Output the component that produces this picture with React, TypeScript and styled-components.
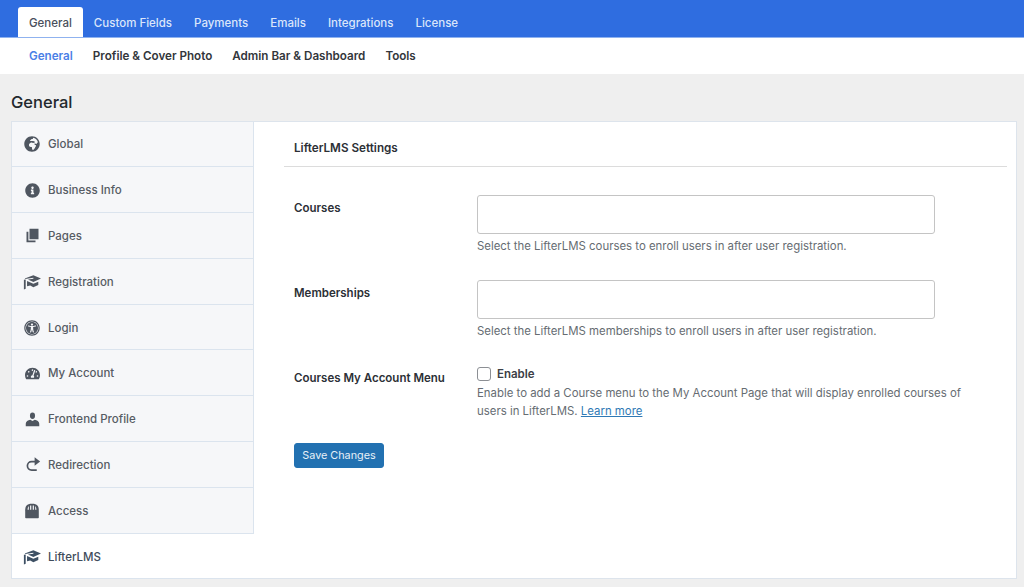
import React from "react";
import styled, { createGlobalStyle } from "styled-components";
import { FaGlobeAfrica, FaInfoCircle, FaTachometerAlt, FaUniversalAccess } from "react-icons/fa";

const Global = createGlobalStyle`
  html, body {
    margin: 0;
    padding: 0;
    height: 100%;
    overflow: hidden;
    background: #efefef;
    font-family: Inter, "Liberation Sans", sans-serif;
  }
`;

const PagesIcon = () => (
  <svg viewBox="0 0 20 20" width="15" height="15">
    <path d="M6 1h12v14H6z" fill="currentColor" />
    <path d="M2 5h2.500v11.500H14V19H2z" fill="currentColor" />
  </svg>
);

const CapIcon = () => (
  <svg viewBox="0 0 20 20" width="18" height="18">
    <path d="M11.500 2.500L20 6.200l-8.500 3.700-6-2.600 6-.9V5.200L2.500 6.600 2 6.200z" fill="currentColor" />
    <path d="M1 7.500l2-.4v10.300l-2 .9zM4.500 9l7 3 5.500-2.400v3.600l-5.500 2.600-3.500-2-3.500.8z" fill="currentColor" />
  </svg>
);

const PersonIcon = () => (
  <svg viewBox="0 0 20 20" width="15" height="15">
    <ellipse cx="10" cy="5" rx="3.400" ry="4.200" fill="currentColor" />
    <path d="M1 15.500c0-3 3-4.800 6-5.300l3 1.800 3-1.800c3 .5 6 2.300 6 5.300V19H1z" fill="currentColor" />
  </svg>
);

const RedoIcon = () => (
  <svg viewBox="0 0 20 20" width="17" height="17">
    <path d="M13 6.500H9a5 5 0 0 0 0 10h6" fill="none" stroke="currentColor" strokeWidth="2" />
    <path d="M12.500 1.500l6.500 5-6.500 5z" fill="currentColor" />
  </svg>
);

const StoreIcon = () => (
  <svg viewBox="0 0 20 20" width="16" height="16">
    <path d="M1.500 9C1.700 4 3 1 10 1s8.300 3 8.500 8v9a1 1 0 0 1-1 1h-15a1 1 0 0 1-1-1z" fill="currentColor" />
    <path d="M4.500 8.500c.1-2 .5-3.700 1.500-4.600v4.600zM7.600 8.500V3h1.500v5.500zM10.900 8.500V3h1.500v5.500zM14 3.900c1 .9 1.400 2.600 1.500 4.600H14z" fill="#f6f7f9" />
  </svg>
);

const Page = styled.div`
  width: 1024px;
  height: 587px;
  display: flex;
  flex-direction: column;
`;

const TopBar = styled.nav`
  height: 37px;
  background: #2f6de0;
  border-bottom: 1px solid #8fb2ef;
  display: flex;
  align-items: flex-end;
  padding-left: 18px;
`;

const TopTab = styled.a<{ $active?: boolean }>`
  height: 30px;
  box-sizing: border-box;
  display: flex;
  align-items: center;
  padding: 1px 11px 0;
  font-size: 11.500px;
  font-weight: 500;
  border-radius: 3px 3px 0 0;
  color: ${(p) => (p.$active ? "#4a4f5c" : "#dbe6fa")};
  background: ${(p) => (p.$active ? "#fff" : "transparent")};
`;

const SubBar = styled.nav`
  height: 36px;
  background: #fff;
  display: flex;
  align-items: center;
  gap: 20px;
  padding-left: 29px;
`;

const SubLink = styled.a<{ $active?: boolean }>`
  font-size: 11.650px;
  font-weight: 600;
  color: ${(p) => (p.$active ? "#4a7fe6" : "#33363b")};
`;

const Content = styled.main`
  flex: 1;
  padding: 0 7px 8px 11px;
  display: flex;
  flex-direction: column;
  min-height: 0;
`;

const Title = styled.h1`
  margin: 0;
  height: 46.500px;
  display: flex;
  align-items: center;
  padding-top: 9px;
  box-sizing: border-box;
  font-size: 16.500px;
  font-weight: 500;
  color: #23282d;
`;

const Panel = styled.div`
  flex: 1;
  min-height: 0;
  display: flex;
  background: #fff;
  border: 1px solid #dde4ec;
`;

const Sidebar = styled.ul`
  width: 242px;
  flex: none;
  list-style: none;
  margin: 0;
  padding: 0;
  background: #f6f7f9;
`;

const SideItem = styled.li<{ $active?: boolean }>`
  height: 45.800px;
  box-sizing: border-box;
  display: flex;
  align-items: center;
  padding-top: 1px;
  border-bottom: 1px solid #dbe4ee;
  border-right: ${(p) => (p.$active ? "none" : "1px solid #dbe4ee")};
  background: ${(p) => (p.$active ? "#fff" : "transparent")};
  color: ${(p) => (p.$active ? "#3f4c5c" : "#565c64")};
  font-size: 11.500px;
  font-weight: 500;
`;

const IconSlot = styled.span<{ $active?: boolean }>`
  width: 36px;
  flex: none;
  display: flex;
  justify-content: center;
  padding-left: 4px;
  box-sizing: border-box;
  color: ${(p) => (p.$active ? "#3d5064" : "#4f5660")};
  svg {
    display: block;
  }
`;

const Main = styled.section`
  flex: 1;
  min-width: 0;
  padding: 0 9px 0 30px;
`;

const SectionHead = styled.h2`
  margin: 0;
  height: 45.500px;
  box-sizing: border-box;
  display: flex;
  align-items: center;
  padding: 8px 0 0 10px;
  font-size: 11.700px;
  font-weight: 600;
  color: #2c3036;
  border-bottom: 1px solid #dcdcdc;
`;

const Form = styled.form`
  padding: 28px 0 0 10px;
`;

const Row = styled.div`
  display: flex;
  margin-bottom: 24.500px;
  &:last-of-type {
    margin-bottom: 23px;
  }
`;

const Label = styled.label`
  width: 183px;
  flex: none;
  padding-top: 6px;
  font-size: 11.500px;
  font-weight: 600;
  color: #2c3036;
`;

const Field = styled.div`
  flex: 1;
  min-width: 0;
`;

const SelectBox = styled.div`
  width: 458px;
  height: 39px;
  box-sizing: border-box;
  border: 1px solid #c4c4c4;
  border-radius: 3px;
  background: #fff;
`;

const Help = styled.p`
  margin: 4px 0 0;
  width: 500px;
  font-size: 11.400px;
  line-height: 17.500px;
  color: #666c72;
`;

const Check = styled.label`
  display: flex;
  align-items: center;
  gap: 6px;
  height: 16px;
  margin: 1px 0 -1px;
  font-size: 11.500px;
  font-weight: 600;
  color: #3c4046;
`;

const Box = styled.span`
  width: 14px;
  height: 14px;
  box-sizing: border-box;
  border: 1px solid #8c8f94;
  border-radius: 3px;
  background: #fff;
`;

const MoreLink = styled.a`
  color: #2f79b5;
  text-decoration: underline;
`;

const SaveButton = styled.button`
  display: block;
  width: 90px;
  height: 25px;
  padding: 0;
  border: 1px solid #2271b1;
  border-radius: 3px;
  background: #2271b1;
  color: #e6f0f8;
  font-family: inherit;
  font-size: 10.800px;
  font-weight: 400;
`;

const items: { label: string; icon: React.ReactNode }[] = [
  { label: "Global", icon: <FaGlobeAfrica size={16} /> },
  { label: "Business Info", icon: <FaInfoCircle size={15} /> },
  { label: "Pages", icon: <PagesIcon /> },
  { label: "Registration", icon: <CapIcon /> },
  { label: "Login", icon: <FaUniversalAccess size={16} /> },
  { label: "My Account", icon: <FaTachometerAlt size={15} /> },
  { label: "Frontend Profile", icon: <PersonIcon /> },
  { label: "Redirection", icon: <RedoIcon /> },
  { label: "Access", icon: <StoreIcon /> },
  { label: "LifterLMS", icon: <CapIcon /> },
];

export default function App() {
  return (
    <Page>
      <Global />
      <TopBar>
        <TopTab $active>General</TopTab>
        <TopTab>Custom Fields</TopTab>
        <TopTab>Payments</TopTab>
        <TopTab>Emails</TopTab>
        <TopTab>Integrations</TopTab>
        <TopTab>License</TopTab>
      </TopBar>
      <SubBar>
        <SubLink $active>General</SubLink>
        <SubLink>Profile &amp; Cover Photo</SubLink>
        <SubLink>Admin Bar &amp; Dashboard</SubLink>
        <SubLink>Tools</SubLink>
      </SubBar>
      <Content>
        <Title>General</Title>
        <Panel>
          <Sidebar>
            {items.map((item) => {
              const active = item.label === "LifterLMS";
              return (
                <SideItem key={item.label} $active={active}>
                  <IconSlot $active={active}>{item.icon}</IconSlot>
                  {item.label}
                </SideItem>
              );
            })}
          </Sidebar>
          <Main>
            <SectionHead>LifterLMS Settings</SectionHead>
            <Form>
              <Row>
                <Label>Courses</Label>
                <Field>
                  <SelectBox />
                  <Help>Select the LifterLMS courses to enroll users in after user registration.</Help>
                </Field>
              </Row>
              <Row>
                <Label>Memberships</Label>
                <Field>
                  <SelectBox />
                  <Help>Select the LifterLMS memberships to enroll users in after user registration.</Help>
                </Field>
              </Row>
              <Row>
                <Label>Courses My Account Menu</Label>
                <Field>
                  <Check>
                    <Box />
                    Enable
                  </Check>
                  <Help>
                    Enable to add a Course menu to the My Account Page that will display enrolled courses of users in
                    LifterLMS. <MoreLink>Learn more</MoreLink>
                  </Help>
                </Field>
              </Row>
              <SaveButton type="button">Save Changes</SaveButton>
            </Form>
          </Main>
        </Panel>
      </Content>
    </Page>
  );
}
